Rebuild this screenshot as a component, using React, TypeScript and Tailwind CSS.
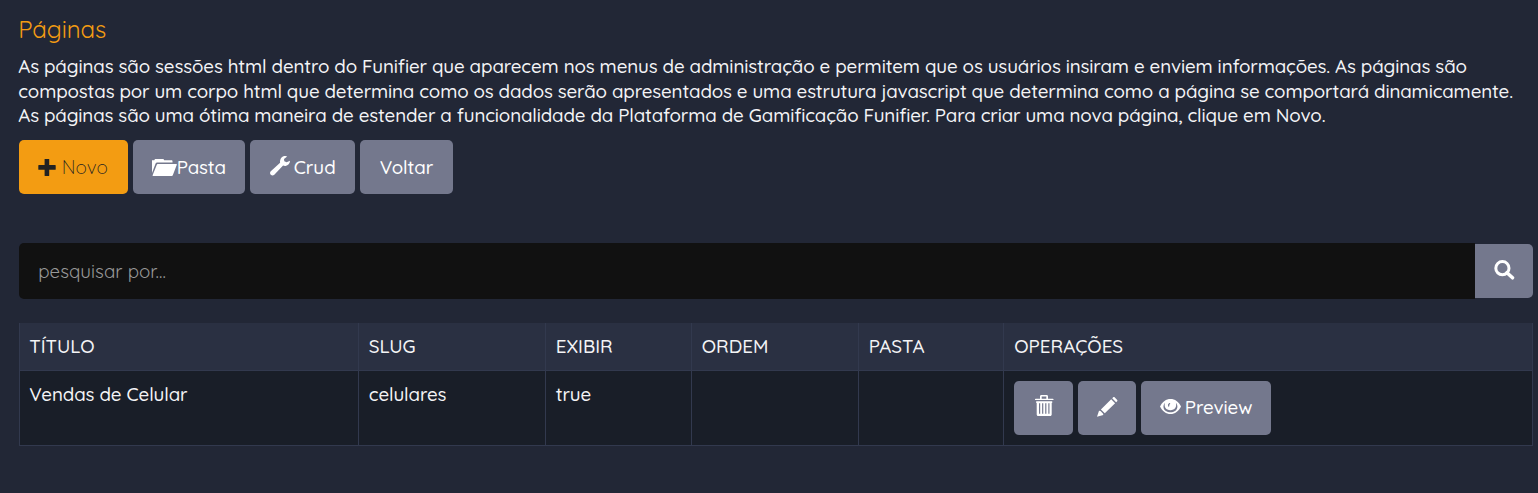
import type { ReactNode } from "react";

function PlusIcon() {
  return (
    <svg width="18" height="17" viewBox="0 0 18 17" fill="currentColor" className="shrink-0">
      <path d="M6.600 0h4.600v6H17.100a.6.6 0 0 1 .6.6v3.600a.6.6 0 0 1-.6.6h-5.900v5.600a.6.6 0 0 1-.6.6H7.200a.6.6 0 0 1-.6-.6v-5.600H.9a.6.6 0 0 1-.6-.6V6.600A.6.6 0 0 1 .9 6h5.700z" />
    </svg>
  );
}

function FolderIcon() {
  return (
    <svg width="25" height="17" viewBox="0 0 25 17" fill="currentColor" className="shrink-0">
      <path d="M0 14V1.200h2.300C2.600.4 3 0 3.800 0h6.900c.8 0 1.200.4 1.500 1.200h7.300c.6 0 1 .4 1 1v1.300H5.200c-.8 0-1.300.4-1.600 1.100z" />
      <path d="M6 5h18.300c.5 0 .7.3.5.8l-3.900 10.200c-.2.6-.6 1-1.200 1H1.100c-.5 0-.7-.3-.5-.8L4.700 6c.3-.7.6-1 1.300-1z" />
    </svg>
  );
}

function WrenchIcon() {
  return (
    <svg width="20" height="20" viewBox="0 0 20 20" fill="currentColor" className="shrink-0">
      <path d="M17.200.6 14 2.900l.3 2.400 2.300 1L20 4.700c.1 2.800-1.800 5-4.400 5.300-.9.1-1.700 0-2.500-.4L4.300 18.700c-1 1-2.500 1-3.500.1-1-1-1-2.500 0-3.500L10.100 6.700C9.600 4 11 1.300 13.500.3c1.200-.5 2.500-.4 3.700.3z" />
    </svg>
  );
}

function SearchIcon() {
  return (
    <svg width="21" height="20" viewBox="0 0 21 20" fill="none" stroke="currentColor" className="shrink-0">
      <circle cx="8.400" cy="8.200" r="6.600" strokeWidth="3" />
      <path d="m13 12.700 5.500 5.100" strokeWidth="3.500" strokeLinecap="round" />
    </svg>
  );
}

function TrashIcon() {
  return (
    <svg width="19" height="21" viewBox="0 0 19 21" fill="currentColor" className="shrink-0">
      <path d="M0 5V4.200C0 3.900.3 3.700.7 3.700H5V1.500C5 .6 5.500 0 6.400 0h5.200c.9 0 1.400.6 1.400 1.500v2.200h4.800c.5 0 .7.2.7.5V5zm6.700-1.300h4.600V1.500H6.700z" />
      <path fillRule="evenodd" d="M1.200 6.300h16V8h-.5v11.500c0 .9-.6 1.500-1.500 1.500H3.200c-.9 0-1.500-.6-1.500-1.500V8h-.5zM4 8.200v10.600h1.200V8.200zm3.100 0v10.600h1.200V8.200zm3.100 0v10.600h1.200V8.200zm3.100 0v10.600h1.200V8.200z" />
    </svg>
  );
}

function PencilIcon() {
  return (
    <svg width="21" height="20" viewBox="0 0 21 20" fill="currentColor" className="shrink-0">
      <path d="m15.200 1.300.8-.8c.6-.6 1.200-.6 1.800 0l2.200 2.200c.6.6.6 1.200 0 1.800l-.9.8z" />
      <path d="m14.200 2.300 3.900 3.900L7.800 16.300 3.900 12.400zM2 13.800l1.500.3 2.600 2.600.2 1.300L0 19.700z" />
    </svg>
  );
}

function EyeIcon() {
  return (
    <svg width="21" height="15" viewBox="0 0 21 15" className="shrink-0">
      <path d="M0 7.500C2.500 2.600 6 0 10.500 0S18.500 2.600 21 7.500C18.500 12.400 15 15 10.500 15S2.500 12.400 0 7.500Z" fill="#fff" />
      <path d="M4.900 3.800C2.200 7 3.300 11.900 8 13c1.600.4 3.400.4 5 0 4.700-1.200 5.600-6 2.900-9.200 1 4.300-1 7.400-5.500 7.400S3.900 8.100 4.900 3.800Z" fill="#74788d" />
      <path d="M9.600 4.700c-.9.400-1.200 1.300-.9 2.300" fill="none" stroke="#74788d" strokeWidth="1.300" strokeLinecap="round" />
    </svg>
  );
}

function Button({ className, children }: { className: string; children: ReactNode }) {
  return (
    <button className={`flex h-[54px] items-center rounded-[5px] whitespace-nowrap ${className}`}>{children}</button>
  );
}

const headCell = "border-r border-[#32394e] pl-[10px] pt-[11px]";
const bodyCell = "border-r border-[#32394e] pl-[10px] pt-[11px] tracking-[-0.1px]";
const columns = "grid grid-cols-[339px_187px_146px_167px_145px_529px]";

export default function App() {
  return (
    <main className="h-[493px] w-[1538px] overflow-hidden bg-[#222736] pt-[14px] pr-[5px] pl-[18.750px] font-['Quicksand','Lato',sans-serif] text-[18.750px] leading-[24px] font-medium text-[#f4f4f6]">
      <h1 className="-ml-[0.5px] h-[40px] pt-px text-[24px] leading-[29px] font-normal tracking-[-0.1px] text-[#f39c12]">Páginas</h1>
      <p className="-ml-[0.5px] h-[86px] leading-[24.500px] whitespace-nowrap">
        <span className="block tracking-[-0.128px]">As páginas são sessões html dentro do Funifier que aparecem nos menus de administração e permitem que os usuários insiram e enviem informações. As páginas são</span>
        <span className="block tracking-[-0.143px]">compostas por um corpo html que determina como os dados serão apresentados e uma estrutura javascript que determina como a página se comportará dinamicamente.</span>
        <span className="block tracking-[-0.143px]">As páginas são uma ótima maneira de estender a funcionalidade da Plataforma de Gamificação Funifier. Para criar uma nova página, clique em Novo.</span>
      </p>

      <div className="flex gap-[5px]">
        <Button className="w-[109px] bg-[#f39c12] pl-[19px] text-[#222222]">
          <PlusIcon />
          <span className="ml-[6px] text-[19px] font-light">Novo</span>
        </Button>
        <Button className="w-[112px] bg-[#74788d] pl-[19px] text-white">
          <FolderIcon />
          <span className="tracking-[-0.15px]">Pasta</span>
        </Button>
        <Button className="w-[105px] bg-[#74788d] pl-[20px] text-white">
          <span className="mb-[3px]"><WrenchIcon /></span>
          <span className="ml-[4px]">Crud</span>
        </Button>
        <Button className="w-[93px] bg-[#74788d] pl-[20px] text-white">
          <span className="tracking-[-0.1px]">Voltar</span>
        </Button>
      </div>

      <div className="mt-[49px] flex h-[56px] items-center">
        <input
          placeholder="pesquisar por..."
          className="h-[56px] w-[1456px] rounded-l-[5px] bg-[#111111] px-[19.500px] font-normal outline-none placeholder:text-[#999999]"
        />
        <Button className="w-[58px] rounded-l-none bg-[#74788d] pb-[2px] pl-[19px] text-white">
          <SearchIcon />
        </Button>
      </div>

      <section className="mt-[24px] w-[1514px] border-l border-[#32394e]">
        <div className={`${columns} h-[48px] border-b border-[#32394e] bg-[#2a3042]`}>
          <div className={headCell}><span className="-ml-[0.5px]">TÍTULO</span></div>
          <div className={headCell}>SLUG</div>
          <div className={headCell}>EXIBIR</div>
          <div className={headCell}>ORDEM</div>
          <div className={headCell}>PASTA</div>
          <div className={headCell}><span className="ml-[0.5px]">OPERAÇÕES</span></div>
        </div>
        <div className={`${columns} h-[75px] border-b border-[#32394e] bg-[#191e28]`}>
          <div className={bodyCell}><span className="-ml-[0.5px]">Vendas de Celular</span></div>
          <div className={bodyCell}>celulares</div>
          <div className={bodyCell}>true</div>
          <div className={bodyCell} />
          <div className={bodyCell} />
          <div className="flex gap-[5px] border-r border-[#32394e] pt-[10px] pl-[10px]">
            <Button className="w-[59px] bg-[#74788d] pb-[5px] pl-[21px] text-white"><TrashIcon /></Button>
            <Button className="w-[58px] bg-[#74788d] pb-[2px] pl-[19px] text-white"><PencilIcon /></Button>
            <Button className="w-[130px] bg-[#74788d] pb-[2px] pl-[19px] text-white">
              <span className="mb-px"><EyeIcon /></span>
              <span className="ml-[4px] tracking-[-0.1px]">Preview</span>
            </Button>
          </div>
        </div>
      </section>
    </main>
  );
}
